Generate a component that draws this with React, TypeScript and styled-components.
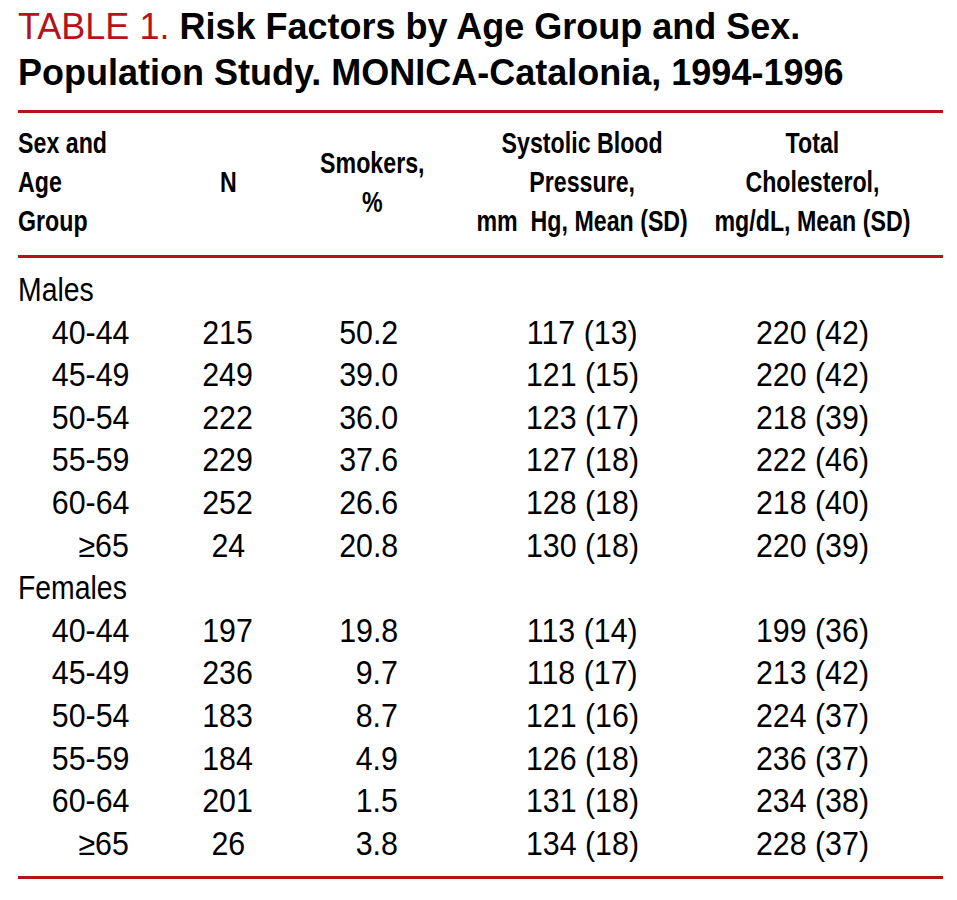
import React from "react";
import styled, { createGlobalStyle } from "styled-components";

const RED = "#b5121b";

type Align = "left" | "center" | "right";

const GlobalStyle = createGlobalStyle`
  body {
    margin: 0;
    background: #fff;
    color: #000;
  }
`;

const Page = styled.div`
  width: 925px;
  padding: 4px 14px 0 18px;
`;

const Title = styled.h1`
  margin: 0;
  font-family: "Liberation Sans", Arial, sans-serif;
  font-size: 36px;
  line-height: 46px;
  font-weight: 700;
`;

const TitleLabel = styled.span`
  font-weight: 400;
  color: ${RED};
`;

const Table = styled.table`
  width: 925px;
  margin-top: 14px;
  border-collapse: collapse;
  table-layout: fixed;
  border-top: 3px solid ${RED};
  border-bottom: 3px solid ${RED};
  font-family: "Liberation Sans", Arial, sans-serif;
`;

// condensed face: the Liberation Sans glyphs narrowed like Arial Narrow
const Squeeze = styled.span<{ $align: Align; $scale: number }>`
  display: inline-block;
  vertical-align: top;
  white-space: nowrap;
  margin: ${({ $align }) => ($align === "center" ? "0 -40px" : "0")};
  transform: scaleX(${({ $scale }) => $scale});
  transform-origin: ${({ $align }) => $align} center;
`;

const HeadRow = styled.tr`
  border-bottom: 3px solid ${RED};
`;

const HeadCell = styled.th<{ $align: Align; $padRight?: number }>`
  padding: 11px ${({ $padRight }) => $padRight ?? 0}px 14px 0;
  font-size: 29px;
  line-height: 39px;
  font-weight: 700;
  text-align: ${({ $align }) => $align};
  vertical-align: middle;
  white-space: nowrap;
`;

const Body = styled.tbody`
  tr:first-child td {
    padding-top: 11px;
  }
  tr:last-child td {
    padding-bottom: 11px;
  }
`;

const Cell = styled.td<{ $align: Align; $padRight?: number }>`
  padding: 0 ${({ $padRight }) => $padRight ?? 0}px 0 0;
  font-size: 33px;
  line-height: 42.6px;
  font-weight: 400;
  text-align: ${({ $align }) => $align};
  white-space: nowrap;
`;

function Head({
  align = "center",
  padRight,
  children,
}: {
  align?: Align;
  padRight?: number;
  children: React.ReactNode;
}) {
  return (
    <HeadCell $align={align} $padRight={padRight}>
      <Squeeze $align={align} $scale={0.8}>
        {children}
      </Squeeze>
    </HeadCell>
  );
}

function Value({
  align = "center",
  padRight,
  colSpan,
  scale = 0.92,
  children,
}: {
  align?: Align;
  padRight?: number;
  colSpan?: number;
  scale?: number;
  children: React.ReactNode;
}) {
  return (
    <Cell $align={align} $padRight={padRight} colSpan={colSpan}>
      <Squeeze $align={align} $scale={scale}>
        {children}
      </Squeeze>
    </Cell>
  );
}

type Row = [string, number, string, string, string];

const groups: { label: string; rows: Row[] }[] = [
  {
    label: "Males",
    rows: [
      ["40-44", 215, "50.2", "117 (13)", "220 (42)"],
      ["45-49", 249, "39.0", "121 (15)", "220 (42)"],
      ["50-54", 222, "36.0", "123 (17)", "218 (39)"],
      ["55-59", 229, "37.6", "127 (18)", "222 (46)"],
      ["60-64", 252, "26.6", "128 (18)", "218 (40)"],
      ["≥65", 24, "20.8", "130 (18)", "220 (39)"],
    ],
  },
  {
    label: "Females",
    rows: [
      ["40-44", 197, "19.8", "113 (14)", "199 (36)"],
      ["45-49", 236, "9.7", "118 (17)", "213 (42)"],
      ["50-54", 183, "8.7", "121 (16)", "224 (37)"],
      ["55-59", 184, "4.9", "126 (18)", "236 (37)"],
      ["60-64", 201, "1.5", "131 (18)", "234 (38)"],
      ["≥65", 26, "3.8", "134 (18)", "228 (37)"],
    ],
  },
];

export default function App() {
  return (
    <Page>
      <GlobalStyle />
      <Title>
        <TitleLabel>TABLE 1.</TitleLabel> Risk Factors by Age Group and Sex.
        <br />
        Population Study. MONICA-Catalonia, 1994-1996
      </Title>
      <Table>
        <colgroup>
          <col style={{ width: 132 }} />
          <col style={{ width: 156 }} />
          <col style={{ width: 158 }} />
          <col style={{ width: 236 }} />
          <col style={{ width: 243 }} />
        </colgroup>
        <thead>
          <HeadRow>
            <Head align="left">
              Sex and
              <br />
              Age
              <br />
              Group
            </Head>
            <Head>N</Head>
            <Head padRight={26}>
              Smokers,
              <br />%
            </Head>
            <Head>
              Systolic Blood
              <br />
              Pressure,
              <br />
              mm{"\u00a0 "}Hg, Mean (SD)
            </Head>
            <Head padRight={19}>
              Total
              <br />
              Cholesterol,
              <br />
              mg/dL, Mean (SD)
            </Head>
          </HeadRow>
        </thead>
        <Body>
          {groups.map((g) => (
            <React.Fragment key={g.label}>
              <tr>
                <Value align="left" colSpan={5} scale={0.86}>
                  {g.label}
                </Value>
              </tr>
              {g.rows.map(([age, n, smokers, sbp, chol]) => (
                <tr key={g.label + age}>
                  <Value align="right" padRight={21}>
                    {age}
                  </Value>
                  <Value>{n}</Value>
                  <Value align="right" padRight={66}>
                    {smokers}
                  </Value>
                  <Value>{sbp}</Value>
                  <Value padRight={19}>{chol}</Value>
                </tr>
              ))}
            </React.Fragment>
          ))}
        </Body>
      </Table>
    </Page>
  );
}
